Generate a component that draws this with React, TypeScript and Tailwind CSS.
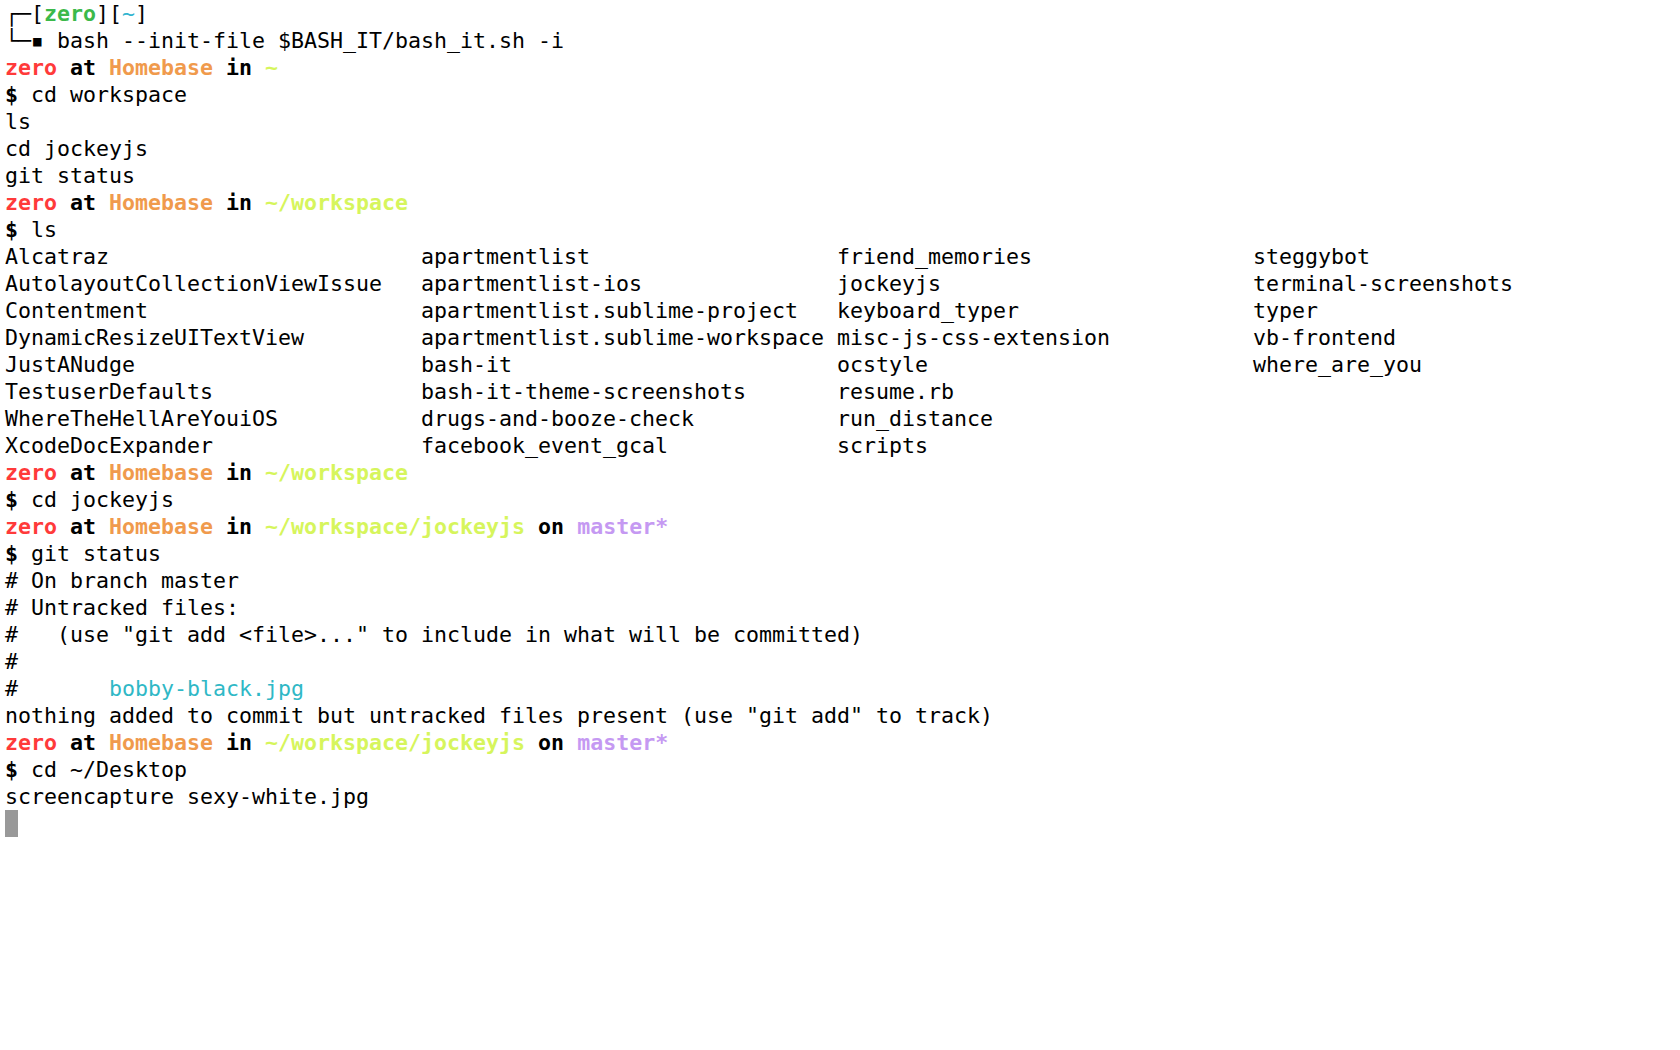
const lsCols = [
  ["Alcatraz", "AutolayoutCollectionViewIssue", "Contentment", "DynamicResizeUITextView", "JustANudge", "TestuserDefaults", "WhereTheHellAreYouiOS", "XcodeDocExpander"],
  ["apartmentlist", "apartmentlist-ios", "apartmentlist.sublime-project", "apartmentlist.sublime-workspace", "bash-it", "bash-it-theme-screenshots", "drugs-and-booze-check", "facebook_event_gcal"],
  ["friend_memories", "jockeyjs", "keyboard_typer", "misc-js-css-extension", "ocstyle", "resume.rb", "run_distance", "scripts"],
  ["steggybot", "terminal-screenshots", "typer", "vb-frontend", "where_are_you"],
];

function Prompt({ path, branch }: { path: string; branch?: string }) {
  return (
    <div className="font-bold">
      <span className="text-[#ff3a3a]">zero</span> at <span className="text-[#f09a4c]">Homebase</span> in{" "}
      <span className="text-[#d6f55c]">{path}</span>
      {branch && (
        <>
          {" "}on <span className="text-[#c599f2]">{branch}</span>
        </>
      )}
    </div>
  );
}

function Cmd({ children }: { children: string }) {
  return (
    <div>
      <span className="font-bold">$</span> {children}
    </div>
  );
}

export default function App() {
  const rows = Array.from({ length: 8 }, (_, r) => r);
  return (
    <div
      className="w-[1680px] h-[1050px] bg-white text-black pl-[5px] overflow-hidden whitespace-pre text-[21.6px] leading-[27px]"
      style={{ fontFamily: '"DejaVu Sans Mono", "Liberation Mono", monospace' }}
    >
      <div>
        ┌─[<span className="font-bold text-[#3bb94a]">zero</span>][<span className="text-[#31b4cf]">~</span>]
      </div>
      <div>└─▪ bash --init-file $BASH_IT/bash_it.sh -i</div>
      <Prompt path="~" />
      <Cmd>cd workspace</Cmd>
      <div>ls</div>
      <div>cd jockeyjs</div>
      <div>git status</div>
      <Prompt path="~/workspace" />
      <Cmd>ls</Cmd>
      <div className="grid grid-cols-[repeat(4,416px)]">
        {rows.map((r) =>
          lsCols.map((col, c) => <div key={`${r}-${c}`}>{col[r] ?? " "}</div>)
        )}
      </div>
      <Prompt path="~/workspace" />
      <Cmd>cd jockeyjs</Cmd>
      <Prompt path="~/workspace/jockeyjs" branch="master*" />
      <Cmd>git status</Cmd>
      <div># On branch master</div>
      <div># Untracked files:</div>
      <div>#   (use "git add &lt;file&gt;..." to include in what will be committed)</div>
      <div>#</div>
      <div>
        #       <span className="text-[#2fb8c6]">bobby-black.jpg</span>
      </div>
      <div>nothing added to commit but untracked files present (use "git add" to track)</div>
      <Prompt path="~/workspace/jockeyjs" branch="master*" />
      <Cmd>cd ~/Desktop</Cmd>
      <div>screencapture sexy-white.jpg</div>
      <div className="h-[27px] flex items-center">
        <div className="w-[13px] h-[27px] bg-[#999999]" />
      </div>
    </div>
  );
}
